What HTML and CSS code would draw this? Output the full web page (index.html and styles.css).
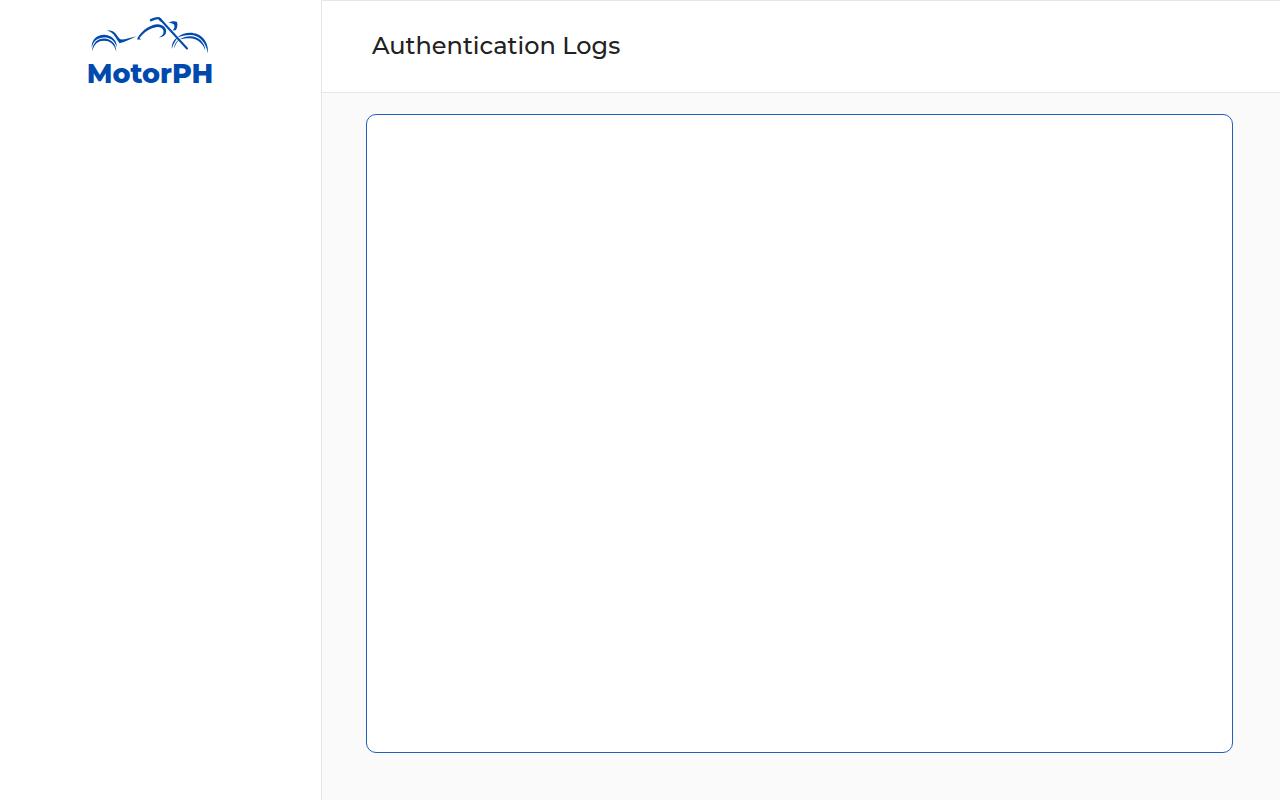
FILE: index.html
```html
<!DOCTYPE html>
<html lang="en">
<head>
<meta charset="utf-8">
<title>Authentication Logs</title>
<link rel="stylesheet" href="styles.css">
</head>
<body>
<div class="app">
  <aside class="sidebar">
    <div class="brand">
      <svg class="brand-mark" viewBox="87 14 126 42" aria-hidden="true">
        <path d="M91.800 48C91 40 97 34.800 104 34.800C111 34.800 117 40 116.800 47C114 40 110 37.600 104 37.600C98 37.600 93 41 91.800 48Z"/>
        <path d="M92.300 51.500C91.800 43 98 38.500 104 38.500C111 38.500 116.500 44 116.200 51.500C114 44 110 40.800 104 40.800C98 40.800 94 44 92.300 51.500Z"/>
        <path d="M106.500 30.200C111 30.200 114 31 116 34C118 37 119 38.800 121 39.500C126 39.500 131 37.400 136.500 36.200C131 39 125 42 119.500 43.300C118 41 116.500 39 115 36.500C113 33 110 31.300 106.500 30.200Z"/>
        <path d="M137 39.500C139 33 149 24.800 157 24.300C163 24.100 167 28 166 32.300C165.500 35.500 162.500 37.300 159 37.400C162 36 164 34 163.500 31C163 28 160 26.700 156 27.200C150 28 144 32 139.500 38L141 39.500Z"/>
        <path d="M168.500 23C171 21 175 20.500 177 22C178 25 177 29 175.500 30.300L172.500 30.500C174.500 28.500 175 26.500 174 24.500C172.500 23 170.500 23 168.500 23Z"/>
        <path class="frame" d="M151 20.200C154 18.800 157 17.600 159 18.300L161 20.300"/>
        <path class="fork" d="M160 19L187 48.500"/>
        <path d="M171.800 49C171.500 43 174 39.500 178 37C175.500 41 173 44 171.800 49ZM177.500 37.300C181 34 186 32.700 190 32.700C201 32.700 209 41 207.900 53.500C206 42 199 35 190 35C185 35 181.500 36 177.500 37.300Z"/>
        <path d="M174 49C174 45 176 41 180 38.500C177 42 175 45 174 49ZM179.500 39.500C183 37 187 36.300 190 36.300C199 36.300 205 43 205.300 50.500C203 43.500 197 38.300 190 38.300C186 38.300 183 38.800 179.500 39.500Z"/>
      </svg>
      <span class="brand-name">MotorPH</span>
    </div>
  </aside>
  <div class="content">
    <header class="topbar">
      <h1 class="title">Authentication Logs</h1>
    </header>
    <main class="main">
      <section class="panel" aria-label="Authentication Logs"></section>
    </main>
  </div>
</div>
</body>
</html>
```
FILE: styles.css
```css
* {
  box-sizing: border-box;
}

body {
  margin: 0;
  background: #fff;
  color: #222;
  font-family: Montserrat, Inter, "Open Sans", sans-serif;
}

.app {
  display: flex;
  min-height: 100vh;
}

.sidebar {
  flex: 0 0 322px;
  border-right: 1px solid #e6e6e6;
  background: #fff;
  padding: 14px 21px 0 0;
}

.brand {
  display: flex;
  flex-direction: column;
  align-items: center;
  color: #004aad;
}

.brand-mark {
  width: 126px;
  height: 42px;
  fill: #004aad;
}

.frame,
.fork {
  fill: none;
  stroke: #004aad;
  stroke-linecap: round;
  stroke-width: 2.4;
}

.fork {
  stroke-width: 2;
}

.brand-name {
  margin-top: 2px;
  font-size: 27px;
  line-height: 32px;
  font-weight: 800;
}

.content {
  flex: 1;
  display: flex;
  flex-direction: column;
  background: #fafafa;
}

.topbar {
  display: flex;
  align-items: center;
  padding: 22px 50px 23px;
  border-top: 1px solid #e6e6e6;
  border-bottom: 1px solid #e6e6e6;
  background: #fff;
}

.title {
  margin: 0;
  font-size: 24px;
  line-height: 46px;
  font-weight: 500;
}

.main {
  flex: 1;
  display: flex;
  padding: 21px 47px 47px 44px;
}

.panel {
  flex: 1;
  border: 1px solid #1f5fbf;
  border-radius: 10px;
  background: #fff;
}
```
